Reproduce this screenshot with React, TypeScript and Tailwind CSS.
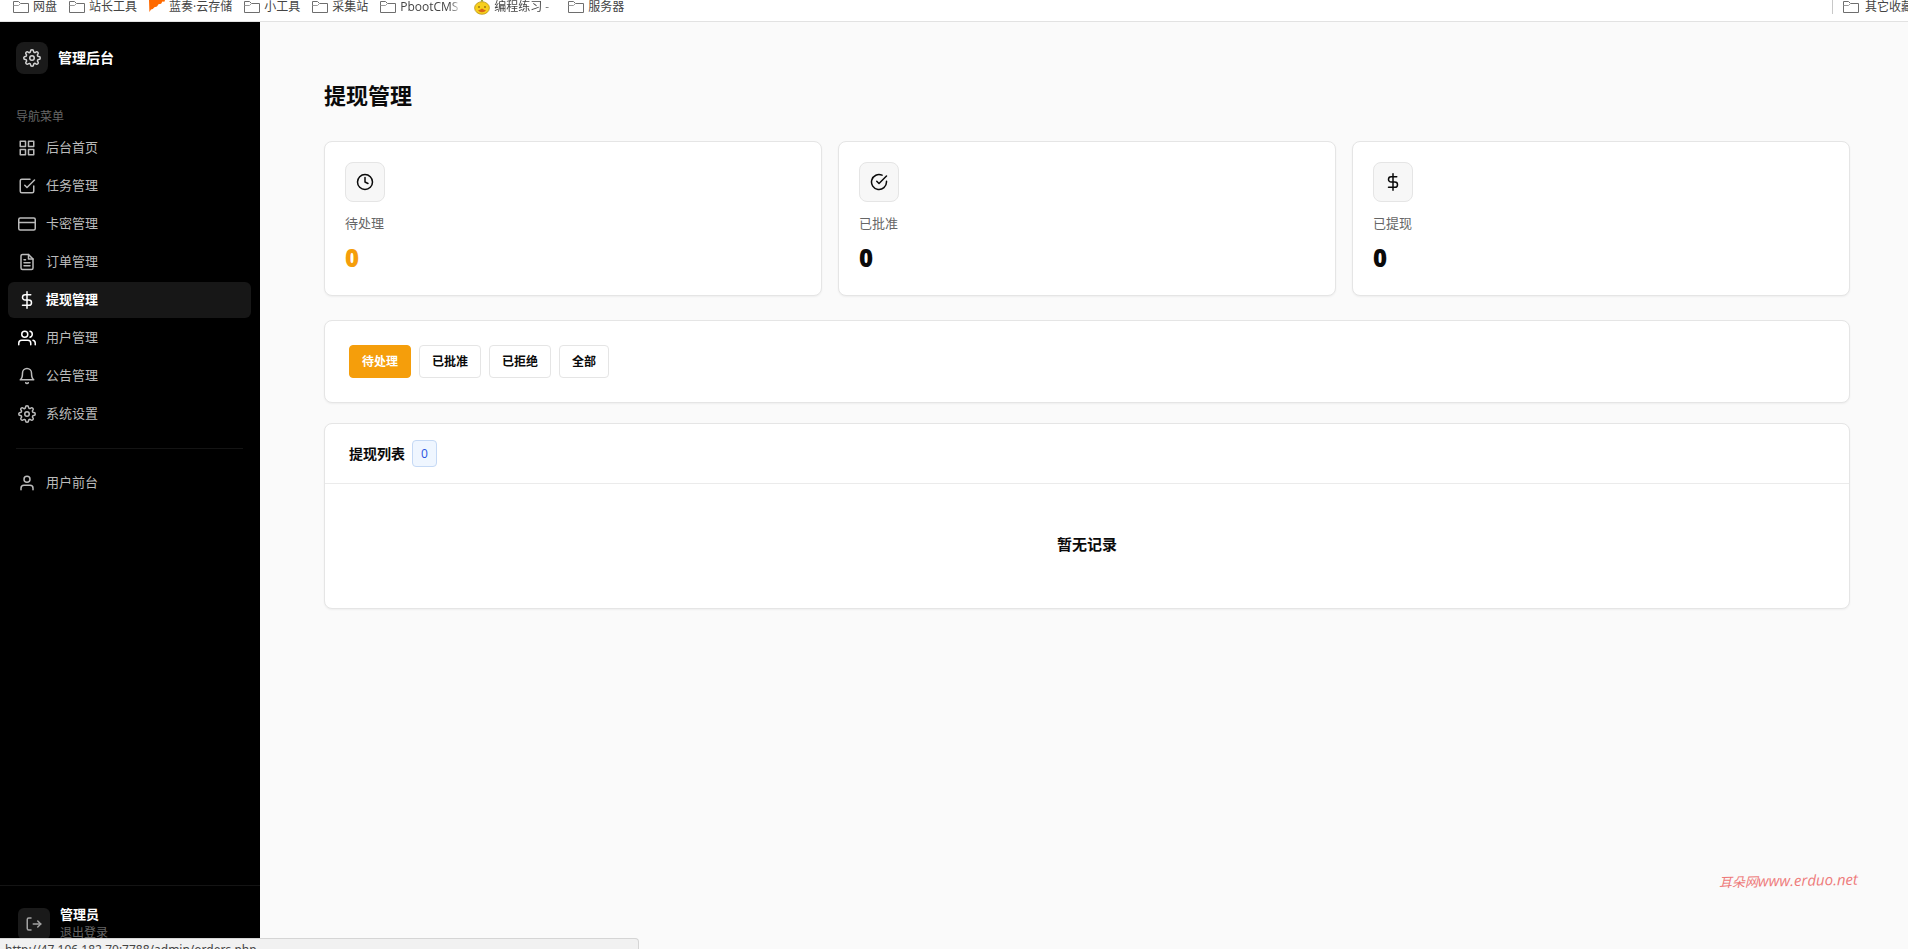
import type { ReactNode } from 'react';
import type { IconType } from 'react-icons';
import {
  FiBell,
  FiCheckCircle,
  FiCheckSquare,
  FiClock,
  FiCreditCard,
  FiDollarSign,
  FiFileText,
  FiGrid,
  FiSettings,
  FiUser,
  FiUsers,
} from 'react-icons/fi';

type NavItem = { label: string; icon: IconType; active?: boolean; hot?: boolean };

function FolderIcon() {
  return (
    <svg width="16" height="14" viewBox="0 0 16 14" fill="none" stroke="#6e6e6e" className="shrink-0">
      <path d="M.5 12.5v-11h5l2 2h8v9z" />
      <path d="M.5 5.5h5l2-2" stroke="#9a9a9a" />
    </svg>
  );
}

function FlameIcon() {
  return (
    <svg width="16" height="14" viewBox="0 0 16 14" className="shrink-0">
      <path d="M0 0h16l-.6 1.8-2-.4-1.3 2.4-2.6.4L8 6.4l-2.6.8L3.8 9 2 9.6.4 12z" fill="#ff6a00" />
    </svg>
  );
}

function DuckIcon() {
  return (
    <svg width="16" height="16" viewBox="0 0 16 16" className="shrink-0">
      <path d="M6.4 2.6 8 0l1.6 2.6z" fill="#8a9a2a" />
      <ellipse cx="8" cy="9" rx="7.4" ry="6.3" fill="#f7cf1d" stroke="#b08a14" strokeWidth=".7" />
      <circle cx="5" cy="8" r=".8" fill="#5a3a0a" />
      <circle cx="11" cy="8" r=".8" fill="#5a3a0a" />
      <path d="M4 11.2q1.8-.4 4-1.8 2.2 1.4 4 1.8-1.4 2-4 2t-4-2z" fill="#d9661a" />
    </svg>
  );
}

function LogoutIcon() {
  return (
    <svg width="18" height="18" viewBox="0 0 24 24" fill="none" stroke="currentColor" strokeWidth="2" strokeLinecap="round" strokeLinejoin="round">
      <path d="M8 20H5a2 2 0 0 1-2-2V6a2 2 0 0 1 2-2h3" />
      <path d="M11 12h10" />
      <path d="m17 8 4 4-4 4" />
    </svg>
  );
}

const bookmarks: { label: string; icon: ReactNode; fade?: boolean }[] = [
  { label: '网盘', icon: <FolderIcon /> },
  { label: '站长工具', icon: <FolderIcon /> },
  { label: '蓝奏·云存储', icon: <FlameIcon /> },
  { label: '小工具', icon: <FolderIcon /> },
  { label: '采集站', icon: <FolderIcon /> },
  { label: 'PbootCMS', icon: <FolderIcon />, fade: true },
  { label: '编程练习 - ', icon: <DuckIcon />, fade: true },
  { label: '服务器', icon: <FolderIcon /> },
];

const navItems: NavItem[] = [
  { label: '后台首页', icon: FiGrid },
  { label: '任务管理', icon: FiCheckSquare },
  { label: '卡密管理', icon: FiCreditCard },
  { label: '订单管理', icon: FiFileText },
  { label: '提现管理', icon: FiDollarSign, active: true },
  { label: '用户管理', icon: FiUsers, hot: true },
  { label: '公告管理', icon: FiBell },
  { label: '系统设置', icon: FiSettings },
];

const stats: { label: string; value: number; icon: IconType; color: string }[] = [
  { label: '待处理', value: 0, icon: FiClock, color: 'text-[#f59e0b]' },
  { label: '已批准', value: 0, icon: FiCheckCircle, color: 'text-[#0a0a0a]' },
  { label: '已提现', value: 0, icon: FiDollarSign, color: 'text-[#0a0a0a]' },
];

const filters = ['待处理', '已批准', '已拒绝', '全部'];

function NavLink({ item }: { item: NavItem }) {
  return (
    <a
      href="#"
      className={
        item.active
          ? 'flex h-9 items-center gap-2.5 rounded-md bg-[#171717] px-2.5 font-bold text-white'
          : 'flex h-9 items-center gap-2.5 rounded-md px-2.5 text-[#bbb]'
      }
    >
      <item.icon size={18} className={item.hot ? 'text-white' : ''} />
      {item.label}
    </a>
  );
}

export default function App() {
  return (
    <div className="flex h-screen flex-col overflow-hidden bg-[#fafafa] font-['Open_Sans','Noto_Sans_CJK_SC',sans-serif] text-[#0a0a0a]">
      <div className="flex h-[22px] shrink-0 justify-between border-b border-[#e2e2e2] bg-white text-xs leading-[14px] text-[#444]">
        <nav className="flex h-[14px] items-center gap-3 pl-[13px]">
          {bookmarks.map(b => (
            <a key={b.label} href="#" className="flex items-center gap-1 whitespace-pre">
              {b.icon}
              <span className={b.fade ? 'w-[62px] overflow-hidden mask-r-from-80% mask-r-to-100%' : ''}>{b.label}</span>
            </a>
          ))}
        </nav>
        <a href="#" className="flex h-[14px] w-[76px] items-center gap-1.5 border-l border-[#c8c8c8] pl-2.5 whitespace-nowrap">
          <FolderIcon />
          其它收藏夹
        </a>
      </div>

      <div className="flex min-h-0 flex-1">
        <aside className="flex w-[260px] shrink-0 flex-col bg-black text-[13px]">
          <div className="flex items-center gap-2.5 px-4 pt-5">
            <div className="flex size-8 items-center justify-center rounded-lg bg-[#1a1a1a] text-[#d4d4d4]">
              <FiSettings size={18} />
            </div>
            <span className="text-sm font-bold text-white">管理后台</span>
          </div>
          <div className="mt-[33px] px-4 text-xs leading-5 text-[#666]">导航菜单</div>
          <nav className="mt-[3px] flex flex-col gap-0.5 px-2 pr-[9px]">
            {navItems.map(item => (
              <NavLink key={item.label} item={item} />
            ))}
            <hr className="mx-2 my-3.5 border-[#141414]" />
            <NavLink item={{ label: '用户前台', icon: FiUser }} />
          </nav>
          <div className="mt-auto flex h-16 items-center gap-2.5 border-t border-[#141414] px-[18px] pt-3">
            <button aria-label="退出登录" className="flex size-8 items-center justify-center rounded-md bg-[#1a1a1a] text-[#a3a3a3]">
              <LogoutIcon />
            </button>
            <div>
              <div className="leading-[18px] font-bold text-white">管理员</div>
              <div className="text-xs leading-5 text-[#666]">退出登录</div>
            </div>
          </div>
        </aside>

        <main className="relative flex-1 pt-[57px] pr-[58px] pl-16">
          <h1 className="mb-[30px] text-[22px] leading-8 font-bold">提现管理</h1>

          <div className="grid grid-cols-3 gap-4">
            {stats.map(s => (
              <div key={s.label} className="rounded-lg border border-[#e5e5e5] bg-white p-5 shadow-xs">
                <div className="flex size-10 items-center justify-center rounded-lg border border-[#e5e5e5] bg-[#f7f7f7]">
                  <s.icon size={18} />
                </div>
                <div className="mt-[11px] text-[13px] leading-5 text-[#666]">{s.label}</div>
                <div className={`mt-2 mb-px text-2xl leading-[33px] font-extrabold ${s.color}`}>{s.value}</div>
              </div>
            ))}
          </div>

          <div className="mt-6 flex gap-2 rounded-lg border border-[#e5e5e5] bg-white p-6 shadow-xs">
            {filters.map((f, i) => (
              <button
                key={f}
                className={
                  i === 0
                    ? 'h-[33px] rounded border border-[#f59e0b] bg-[#f59e0b] px-3 text-xs font-semibold text-white'
                    : 'h-[33px] rounded border border-[#e5e5e5] bg-white px-3 text-xs font-semibold'
                }
              >
                {f}
              </button>
            ))}
          </div>

          <section className="mt-5 rounded-lg border border-[#e5e5e5] bg-white shadow-xs">
            <div className="flex items-center gap-[7px] border-b border-[#ebebeb] px-6 py-4">
              <h2 className="text-sm font-semibold">提现列表</h2>
              <span className="flex h-[27px] w-[25px] items-center justify-center rounded border border-[#c5d9f5] bg-[#eff6ff] text-xs text-[#2a52e0]">
                0
              </span>
            </div>
            <p className="pt-12 pb-13 text-center text-[15px] leading-6 font-semibold">暂无记录</p>
          </section>

          <div className="absolute right-[50px] bottom-[57px] -rotate-1 text-[15px] leading-[22px] text-[#ee7a7a] italic">
            <span className="text-[13px]">耳朵网</span>www.erduo.net
          </div>
        </main>
      </div>

      <div className="fixed bottom-0 left-0 h-[11px] w-[639px] overflow-hidden rounded-tr border-t border-r border-[#d5d5d5] bg-[#f1f1f1] pt-[3px] pl-[5px] font-['Noto_Sans',sans-serif] text-xs leading-4 text-[#444]">
        http://47.106.182.70:7788/admin/orders.php
      </div>
    </div>
  );
}
